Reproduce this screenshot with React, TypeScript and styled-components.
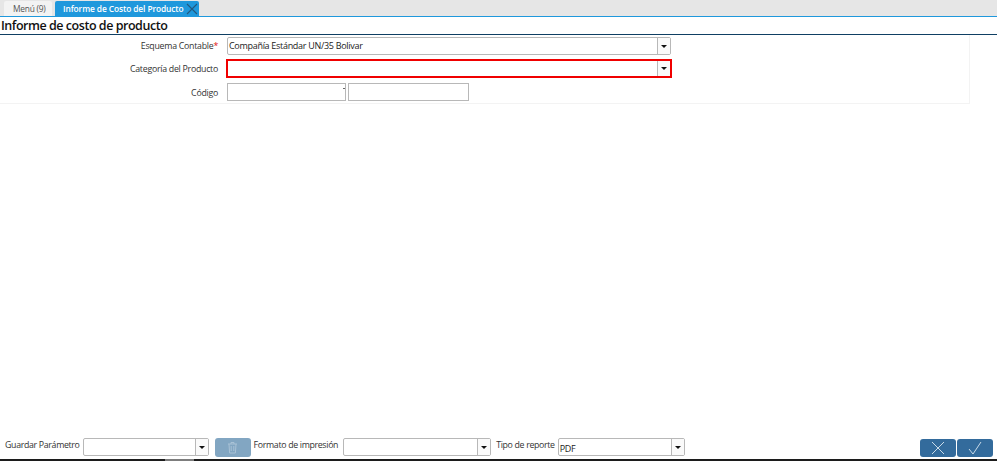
import styled, { createGlobalStyle } from "styled-components";

const GlobalStyle = createGlobalStyle`
  html, body {
    margin: 0;
    padding: 0;
    height: 100%;
    background: #fff;
    overflow: hidden;
    font-family: "Open Sans", sans-serif;
  }
`;

const Page = styled.div`
  width: 997px;
  height: 461px;
  display: flex;
  flex-direction: column;
  color: #333;
  font-size: 8.8px;
  letter-spacing: -0.27px;
`;

const TabBar = styled.div`
  height: 16px;
  flex: none;
  display: flex;
  align-items: flex-end;
  gap: 3px;
  padding-left: 4px;
  background: #e6e6e6;
  border-bottom: 1px solid #1f98dc;
`;

const Tab = styled.div<{ $active?: boolean }>`
  height: 15px;
  display: flex;
  align-items: center;
  box-sizing: border-box;
  padding: 0 1px 0 ${(p) => (p.$active ? "8px" : "9px")};
  width: ${(p) => (p.$active ? "144px" : "48px")};
  background: ${(p) => (p.$active ? "#1f98dc" : "#f3f3f3")};
  color: ${(p) => (p.$active ? "#fff" : "#555")};
  font-size: 8.4px;
  letter-spacing: ${(p) => (p.$active ? "-0.1px" : "-0.24px")};
  font-weight: ${(p) => (p.$active ? 600 : 400)};
  border-radius: 2px 2px 0 0;
  white-space: nowrap;
  svg {
    margin-left: auto;
  }
`;

const Title = styled.div`
  height: 18px;
  flex: none;
  box-sizing: border-box;
  padding-left: 1px;
  font-size: 12.5px;
  letter-spacing: -0.46px;
  font-weight: 600;
  line-height: 18px;
  color: #111;
  border-bottom: 1px solid #0f3f63;
`;

const FormPanel = styled.div`
  width: 970px;
  height: 69px;
  flex: none;
  box-sizing: border-box;
  padding-top: 2px;
  display: flex;
  flex-direction: column;
  gap: 5px;
  border-right: 1px solid #f3f3f3;
  border-bottom: 1px solid #f3f3f3;
`;

const FormRow = styled.div`
  display: grid;
  grid-template-columns: 218px auto;
  column-gap: 9px;
  align-items: center;
  height: 18px;
`;

const Label = styled.label<{ $low?: boolean }>`
  text-align: right;
  white-space: nowrap;
  padding-top: ${(p) => (p.$low ? "1px" : "0")};
`;

const Required = styled.span`
  color: #e01010;
`;

const Combo = styled.div<{ $width: number; $invalid?: boolean }>`
  width: ${(p) => p.$width}px;
  height: ${(p) => (p.$invalid ? "19px" : "18px")};
  margin: ${(p) => (p.$invalid ? "-1px 0 0 -1px" : "0")};
  box-sizing: border-box;
  flex: none;
  display: flex;
  background: #fff;
  border: ${(p) => (p.$invalid ? "2px solid #f00000" : "1px solid #b8b8b8")};
  border-radius: ${(p) => (p.$invalid ? "0" : "2px")};
`;

const ComboText = styled.div<{ $low?: boolean }>`
  flex: 1;
  padding: ${(p) => (p.$low ? "2px" : "0")} 0 0 1px;
  font-size: 9px;
  letter-spacing: -0.3px;
  line-height: 16px;
  color: #222;
  white-space: nowrap;
  overflow: hidden;
`;

const ComboButton = styled.div`
  width: 12px;
  flex: none;
  display: flex;
  align-items: center;
  justify-content: center;
  border-left: 1px solid #b8b8b8;
  background: #fafafa;
  &::after {
    content: "";
    border-left: 3px solid transparent;
    border-right: 3px solid transparent;
    border-top: 3px solid #111;
  }
`;

const CodeFields = styled.div`
  display: flex;
  gap: 2px;
`;

const TextField = styled.div<{ $width: number; $mark?: boolean }>`
  position: relative;
  width: ${(p) => p.$width}px;
  height: 18px;
  box-sizing: border-box;
  border: 1px solid #b8b8b8;
  background: #fff;
  &::after {
    content: "";
    display: ${(p) => (p.$mark ? "block" : "none")};
    position: absolute;
    right: 0;
    top: 4px;
    width: 2px;
    height: 1px;
    background: #666;
  }
`;

const Spacer = styled.div`
  flex: 1;
`;

const Footer = styled.div`
  height: 21px;
  flex: none;
  display: flex;
  align-items: flex-start;
  padding-left: 5px;
`;

const FooterLabel = styled.span<{ $gap?: number; $after?: number }>`
  line-height: 12px;
  letter-spacing: -0.33px;
  margin: 1px ${(p) => p.$after ?? 3}px 0 ${(p) => p.$gap ?? 0}px;
  white-space: nowrap;
`;

const TrashButton = styled.div`
  width: 36px;
  height: 19px;
  margin: 0 3px 0 6px;
  flex: none;
  display: flex;
  align-items: center;
  justify-content: center;
  background: #82a6c2;
  border-radius: 3px;
`;

const ActionGroup = styled.div`
  margin-left: auto;
  margin-right: 4px;
  display: flex;
  gap: 1px;
`;

const ActionButton = styled.div`
  width: 36px;
  height: 18px;
  margin-top: 1px;
  display: flex;
  align-items: center;
  justify-content: center;
  background: #336b9c;
  border-radius: 3px;
`;

const BottomBar = styled.div`
  height: 2px;
  flex: none;
  background: #1c1c1c;
  padding-left: 165px;
`;

const BottomThumb = styled.div`
  width: 29px;
  height: 2px;
  background: #7d7d7d;
`;

export default function App() {
  return (
    <Page>
      <GlobalStyle />
      <TabBar>
        <Tab>Menú (9)</Tab>
        <Tab $active>
          Informe de Costo del Producto
          <svg width="12" height="12" viewBox="0 0 12 12" fill="none" stroke="#24587e" strokeWidth="1.1">
            <path d="M1 1l10 10M11 1L1 11" />
          </svg>
        </Tab>
      </TabBar>
      <Title>Informe de costo de producto</Title>
      <FormPanel>
        <FormRow>
          <Label>
            Esquema Contable<Required>*</Required>
          </Label>
          <Combo $width={444}>
            <ComboText>Compañía Estándar UN/35 Bolivar</ComboText>
            <ComboButton />
          </Combo>
        </FormRow>
        <FormRow>
          <Label>Categoría del Producto</Label>
          <Combo $width={446} $invalid>
            <ComboText />
            <ComboButton />
          </Combo>
        </FormRow>
        <FormRow>
          <Label $low>Código</Label>
          <CodeFields>
            <TextField $width={119} $mark />
            <TextField $width={121} />
          </CodeFields>
        </FormRow>
      </FormPanel>
      <Spacer />
      <Footer>
        <FooterLabel>Guardar Parámetro</FooterLabel>
        <Combo $width={126}>
          <ComboText />
          <ComboButton />
        </Combo>
        <TrashButton>
          <svg width="11" height="13" viewBox="0 0 11 13" fill="none" stroke="#a9c2d6" strokeWidth="1">
            <path d="M1 3h9M4 3V1.5h3V3M2 3l.6 9h5.8L9 3M4.2 5v5M6.8 5v5" />
          </svg>
        </TrashButton>
        <FooterLabel $after={5}>Formato de impresión</FooterLabel>
        <Combo $width={148}>
          <ComboText />
          <ComboButton />
        </Combo>
        <FooterLabel $gap={5}>Tipo de reporte</FooterLabel>
        <Combo $width={127}>
          <ComboText $low>PDF</ComboText>
          <ComboButton />
        </Combo>
        <ActionGroup>
          <ActionButton>
            <svg width="14" height="14" viewBox="0 0 14 14" fill="none" stroke="#c9dbe9" strokeWidth="1">
              <path d="M1 1l12 12M13 1L1 13" />
            </svg>
          </ActionButton>
          <ActionButton>
            <svg width="14" height="14" viewBox="0 0 14 14" fill="none" stroke="#c9dbe9" strokeWidth="1">
              <path d="M1 8l4 5L13 1" />
            </svg>
          </ActionButton>
        </ActionGroup>
      </Footer>
      <BottomBar>
        <BottomThumb />
      </BottomBar>
    </Page>
  );
}
